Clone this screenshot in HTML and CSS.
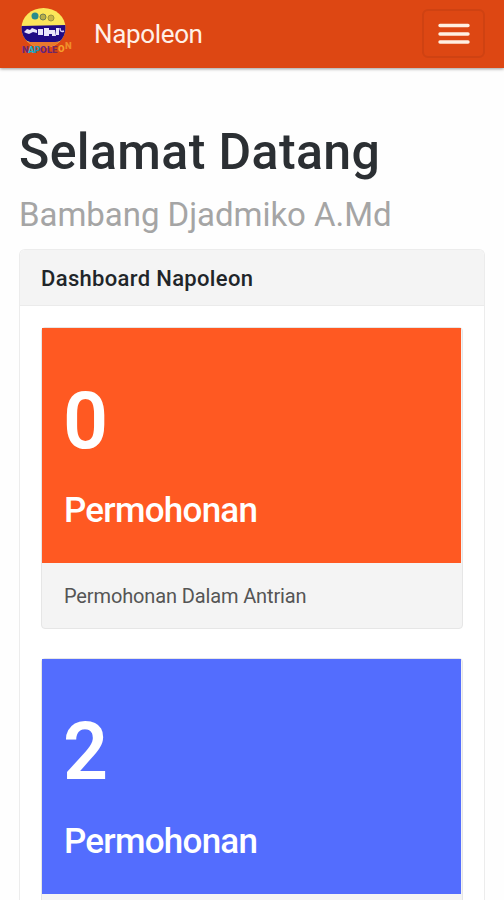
FILE: index.html
```html
<!DOCTYPE html>
<html lang="id">
<head>
<meta charset="utf-8">
<title>Napoleon</title>
<link rel="stylesheet" href="styles.css">
</head>
<body>
<header class="navbar">
  <a class="brand">
    <svg class="logo" width="56" height="52" viewBox="0 0 56 52">
      <defs><clipPath id="disc"><ellipse cx="25.5" cy="22" rx="22" ry="20"/></clipPath></defs>
      <g clip-path="url(#disc)">
        <rect width="56" height="48" fill="#fbe65a"/>
        <path d="M2 20L48 19V31Q43 36 37 36H12Q5 34 2 27Z" fill="#210b85"/>
        <path d="M8 36H42L36 42H13Z" fill="#e8792d"/>
      </g>
      <path d="M6 26l3-3 3 1 2-2 5 2v3l-4-1-4 2-3-1zM20 23h5v6h-5zM26 22h5v2h6l1 6h-4v-2h-3v2h-5zM38 22h3v7h-3z" fill="#e9e5fa"/>
      <path d="M42 22q0 5 4 3" fill="none" stroke="#d5caf4" stroke-width="1.5"/>
      <circle cx="17" cy="10" r="3.5" fill="#298c8d"/>
      <circle cx="25" cy="11" r="3" fill="#b9ae48" stroke="#6f7d54"/>
      <circle cx="33" cy="12" r="3" fill="#c9b547" stroke="#9c963e"/>
      <g class="logo-text">
        <text x="4" y="47" fill="#6d286f">N</text>
        <text x="10" y="47" fill="#16b2cb">A</text>
        <text x="16" y="47" fill="#218fb7">P</text>
        <text x="22" y="47" fill="#62257d">O</text>
        <text x="29" y="47" fill="#62257d">L</text>
        <text x="34" y="47" fill="#76275e">E</text>
        <text x="40" y="46" fill="#f5a02c">O</text>
        <text x="47" y="43" fill="#ef8c2a">N</text>
      </g>
    </svg>
    <span class="brand-name">Napoleon</span>
  </a>
  <button class="toggler" aria-label="Menu">
    <svg width="34" height="24" viewBox="0 0 34 24"><path d="M3 3.5H31M3 12H31M3 20H31" stroke="#fff0e2" stroke-width="3.4" stroke-linecap="round"/></svg>
  </button>
</header>
<main class="content">
  <h1 class="title">Selamat Datang</h1>
  <p class="subtitle">Bambang Djadmiko A.Md</p>
  <section class="card">
    <h2 class="card-header">Dashboard Napoleon</h2>
    <div class="card-body">
      <article class="stat">
        <div class="stat-body orange">
          <div class="count">0</div>
          <div class="label">Permohonan</div>
        </div>
        <div class="stat-footer">Permohonan Dalam Antrian</div>
      </article>
      <article class="stat">
        <div class="stat-body blue">
          <div class="count">2</div>
          <div class="label">Permohonan</div>
        </div>
        <div class="stat-footer"></div>
      </article>
    </div>
  </section>
</main>
</body>
</html>
```
FILE: styles.css
```css
* { box-sizing: border-box; }
html, body { height: 900px; overflow: hidden; }
body {
  display: flex; flex-direction: column;
  margin: 0; background: #fefefe; font-family: Roboto, sans-serif; color: #212529;
}
.navbar {
  display: flex; flex: none; justify-content: space-between; align-items: flex-start;
  height: 68px; padding: 0 19px 0 18px; background: #dd4713;
  box-shadow: 0 1px 3px rgba(0, 0, 0, .4);
}
.brand { display: flex; align-items: center; height: 68px; }
.logo { display: block; margin-top: -4px; }
.logo-text { font: 900 9.5px Roboto, sans-serif; }
.brand-name { margin-left: 20px; font-size: 26px; line-height: 34px; letter-spacing: -.35px; color: #fff0e7; }
.toggler {
  display: flex; align-items: center; justify-content: center;
  width: 63px; height: 49px; margin-top: 9px; padding: 0;
  background: none; border: 2px solid #cf4212; border-radius: 6px;
}
.content { flex: 1; min-height: 0; padding: 54px 19px 0; overflow: hidden; }
.title { margin: 0; font-size: 50px; font-weight: 500; line-height: 61px; letter-spacing: .4px; color: #2b2f33; white-space: nowrap; }
.subtitle { margin: 12px 0 0; font-size: 33px; line-height: 40px; letter-spacing: -.04px; color: #a5a5a5; white-space: nowrap; }
.card { height: 651px; margin-top: 14px; border: 1px solid #ececec; border-bottom: 0; border-radius: 6px 6px 0 0; background: #fff; overflow: hidden; }
.card-header {
  height: 56px; margin: 0; padding: 0 21px; background: #f4f4f4; border-bottom: 1px solid #ebebeb;
  font-size: 22px; font-weight: 500; line-height: 57px; letter-spacing: .33px;
}
.card-body { display: grid; gap: 29px; padding: 21px 21px 0; }
.stat { height: 302px; border: 1px solid #e6e6e6; border-radius: 4px; background: #f4f4f4; }
.stat-body { height: 235px; margin-right: 1px; padding: 45px 22px 0; color: #fff; }
.orange { background: #ff5922; }
.blue { background: #536dfe; }
.count { margin-left: -1px; font-size: 79px; font-weight: 600; line-height: 96px; }
.label { margin-top: 21px; font-size: 35px; font-weight: 500; line-height: 42px; letter-spacing: -.75px; }
.stat-footer { padding: 0 22px; font-size: 20px; line-height: 67px; letter-spacing: -.13px; color: #555; }
```
